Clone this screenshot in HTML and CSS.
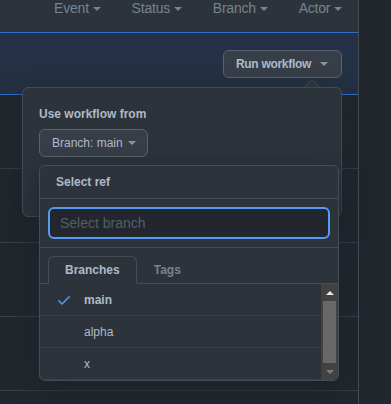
FILE: index.html
```html
<!DOCTYPE html>
<html>
<head>
    <title>Workflow runs</title>
    <link rel="stylesheet" href="styles.css">
</head>
<body>
    <div class="page">
        <div class="main">
            <div class="filters">
                <span class="filter">Event <span class="caret"></span></span>
                <span class="filter">Status <span class="caret"></span></span>
                <span class="filter">Branch <span class="caret"></span></span>
                <span class="filter">Actor <span class="caret"></span></span>
            </div>
            <div class="banner">
                <div class="run-wrap">
                    <button class="btn btn-run">Run workflow <span class="caret"></span></button>
                    <div class="popover">
                        <div class="label">Use workflow from</div>
                        <div class="branch-wrap">
                            <button class="btn btn-branch">Branch: main <span class="caret"></span></button>
                            <div class="select-menu">
                                <div class="menu-header">Select ref</div>
                                <div class="menu-filter">
                                    <input class="filter-input" type="text" placeholder="Select branch">
                                </div>
                                <div class="menu-tabs">
                                    <span class="tab selected">Branches</span>
                                    <span class="tab">Tags</span>
                                </div>
                                <div class="menu-list">
                                    <div class="items">
                                        <div class="item selected">
                                            <svg class="check" width="16" height="16" viewBox="0 0 16 16"><path d="M13.78 4.22a.75.75 0 0 1 0 1.06l-7.25 7.25a.75.75 0 0 1-1.06 0L2.22 9.28a.751.751 0 0 1 .018-1.042.751.751 0 0 1 1.042-.018L6 10.94l6.72-6.72a.75.75 0 0 1 1.06 0Z"></path></svg>
                                            <span>main</span>
                                        </div>
                                        <div class="item">
                                            <span class="check"></span>
                                            <span>alpha</span>
                                        </div>
                                        <div class="item">
                                            <span class="check"></span>
                                            <span>x</span>
                                        </div>
                                    </div>
                                    <div class="scrollbar">
                                        <div class="sb-btn"><span class="arrow-up"></span></div>
                                        <div class="sb-thumb"></div>
                                        <div class="sb-btn"><span class="arrow-down"></span></div>
                                    </div>
                                </div>
                            </div>
                        </div>
                        <!-- confirm button sits under the open menu -->
                        <div class="popover-footer"></div>
                    </div>
                </div>
            </div>
            <div class="run-row"></div>
            <div class="run-row"></div>
            <div class="run-row"></div>
            <div class="run-row"></div>
        </div>
        <div class="side"></div>
    </div>
</body>
</html>
```

FILE: styles.css
```css
* {
    box-sizing: border-box;
}
body {
    margin: 0;
    background-color: #22272e;
    color: #adbac7;
    font-family: "Liberation Sans", Arial, sans-serif;
}
.page {
    display: flex;
    height: 404px;
    overflow: hidden;
}
.main {
    width: 359px;
    flex-shrink: 0;
    border-right: 1px solid #444c56;
}
.side {
    flex: 1;
}
.caret {
    display: inline-block;
    width: 0;
    height: 0;
    border-top: 4px solid currentColor;
    border-left: 4px solid transparent;
    border-right: 4px solid transparent;
    vertical-align: middle;
}
.filters {
    height: 32px;
    background-color: #2d333b;
    display: flex;
    justify-content: flex-end;
    gap: 31px;
    padding-right: 16px;
    font-size: 14px;
    line-height: 16px;
    letter-spacing: -0.2px;
    color: #768390;
}
.banner {
    height: 63px;
    padding: 17px 16px 0;
    border-top: 1px solid #316dca;
    border-bottom: 1px solid #316dca;
    background: linear-gradient(180deg, #253147, #243042);
    display: flex;
    justify-content: flex-end;
    align-items: flex-start;
}
.run-row {
    height: 74px;
    border-bottom: 1px solid #373e47;
}
.btn {
    height: 28px;
    padding: 0 12px;
    display: inline-flex;
    align-items: center;
    gap: 9px;
    font-family: inherit;
    font-size: 12px;
    font-weight: bold;
    color: #adbac7;
    background-color: #373e47;
    border: 1px solid #5b636d;
    border-radius: 6px;
}
.btn .caret {
    color: #8b949e;
}
.btn-run {
    letter-spacing: -0.3px;
    padding-right: 13px;
}
.run-wrap {
    position: relative;
}
.popover {
    position: absolute;
    top: 37px;
    right: 0;
    width: 320px;
    padding: 16px;
    background-color: #2d333b;
    border: 1px solid #444c56;
    border-radius: 6px;
    box-shadow: 0 8px 24px rgba(28, 33, 40, 0.6);
    z-index: 5;
}
.popover::before,
.popover::after {
    content: "";
    position: absolute;
    width: 0;
    height: 0;
    border-style: solid;
    border-color: transparent;
}
.popover::before {
    top: -17px;
    right: 21px;
    border-width: 8px;
    border-bottom-color: #444c56;
}
.popover::after {
    top: -15px;
    right: 22px;
    border-width: 7px;
    border-bottom-color: #2d333b;
}
.label {
    font-size: 12px;
    font-weight: bold;
    line-height: 20px;
    margin-bottom: 5px;
}
.branch-wrap {
    position: relative;
}
.btn-branch {
    font-weight: normal;
    gap: 5px;
    padding-right: 11px;
}
.popover-footer {
    margin-top: 11px;
    height: 32px;
    border-radius: 6px;
    background-color: #347d39;
}
.select-menu {
    position: absolute;
    top: 36px;
    left: 0;
    width: 300px;
    background-color: #2d333b;
    border: 1px solid #444c56;
    border-radius: 6px;
    box-shadow: 0 8px 24px rgba(28, 33, 40, 0.8);
    overflow: hidden;
    z-index: 6;
}
.menu-header {
    height: 33px;
    padding: 0 16px;
    line-height: 32px;
    font-size: 12px;
    font-weight: bold;
    border-bottom: 1px solid #444c56;
}
.menu-filter {
    padding: 8px;
    border-bottom: 1px solid #444c56;
}
.filter-input {
    display: block;
    width: 100%;
    height: 32px;
    padding: 0 10px;
    font-family: inherit;
    font-size: 14px;
    color: #adbac7;
    background-color: #22272e;
    border: 2px solid #539bf5;
    border-radius: 6px;
    outline: none;
}
.filter-input::placeholder {
    color: #545d68;
}
.menu-tabs {
    display: flex;
    padding: 8px 8px 0;
    border-bottom: 1px solid #444c56;
}
.tab {
    height: 28px;
    padding: 0 16px;
    margin-bottom: -1px;
    line-height: 26px;
    font-size: 12px;
    font-weight: bold;
    color: #768390;
    border: 1px solid transparent;
    border-radius: 6px 6px 0 0;
}
.tab.selected {
    color: #adbac7;
    background-color: #2d333b;
    border-color: #444c56;
    border-bottom-color: #2d333b;
}
.menu-list {
    display: flex;
}
.items {
    flex: 1;
}
.item {
    height: 32px;
    padding: 0 16px;
    display: flex;
    align-items: center;
    gap: 12px;
    font-size: 12px;
    border-bottom: 1px solid #373e47;
}
.item.selected {
    font-weight: bold;
}
.check {
    width: 16px;
    height: 16px;
    fill: #539bf5;
}
.scrollbar {
    width: 17px;
    display: flex;
    flex-direction: column;
    background-color: #424242;
}
.sb-btn {
    height: 17px;
    display: flex;
    align-items: center;
    justify-content: center;
}
.sb-thumb {
    flex: 1;
    margin: 0 2px;
    background-color: #686868;
}
.arrow-up,
.arrow-down {
    width: 0;
    height: 0;
    border-left: 4px solid transparent;
    border-right: 4px solid transparent;
}
.arrow-up {
    border-bottom: 4px solid #e8e8e8;
}
.arrow-down {
    border-top: 4px solid #7a7a7a;
}
```
